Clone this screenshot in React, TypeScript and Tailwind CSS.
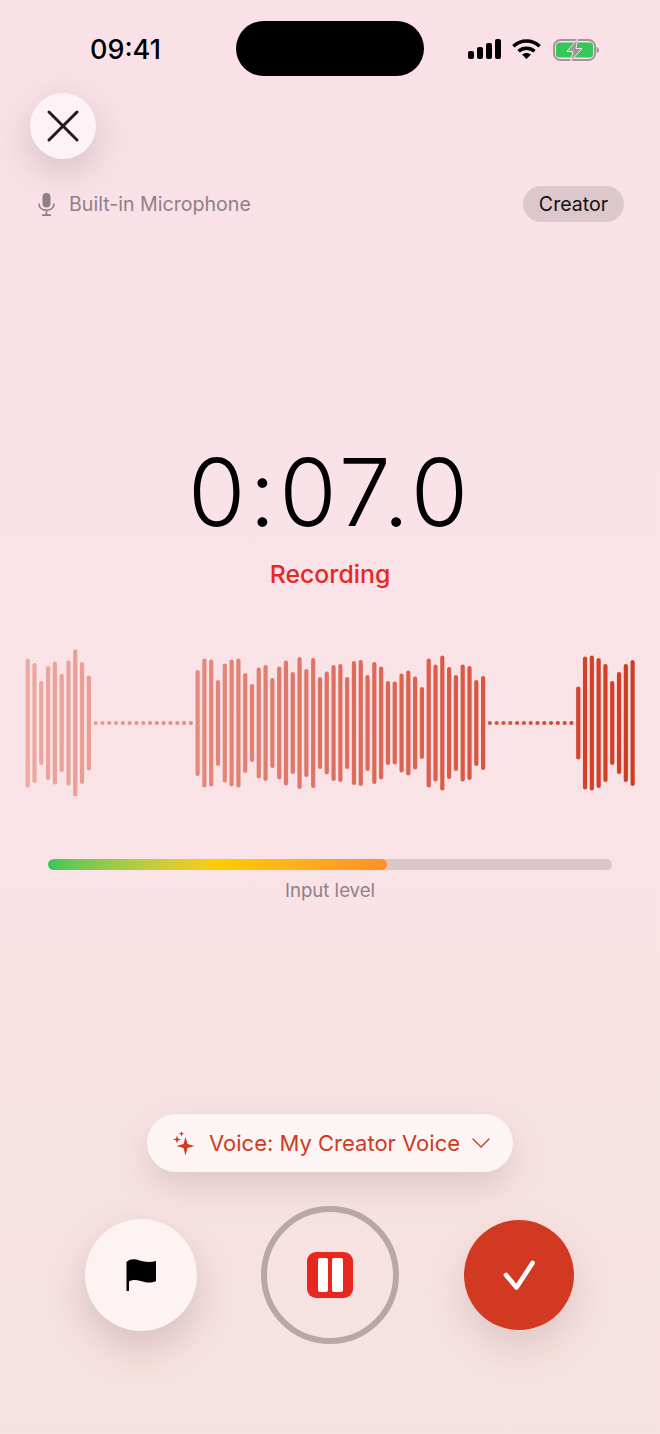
import { ChevronDown, X } from 'lucide-react';

const firstBars = [129, 120, 84, 114, 123, 98, 125, 147, 122, 95];
const middleBars = [
  106, 129, 127, 86, 119, 127, 129, 100, 78, 111, 116, 90, 113, 125, 102, 132, 108, 130, 92, 103,
  116, 118, 92, 124, 126, 96, 122, 113, 84, 83, 99, 105, 93, 72, 129, 117, 135, 112, 96, 117, 114, 86, 94,
];
const lastBars = [73, 133, 135, 130, 118, 84, 102, 118, 126];

// 0 height means a dot in the silent parts
const waveform = [
  ...firstBars,
  ...Array(15).fill(0),
  ...middleBars,
  ...Array(13).fill(0),
  ...lastBars,
];

const Waveform = () => (
  <svg width="660" height="150" viewBox="0 0 660 150" fill="#d13a20" className="mt-[58px] shrink-0">
    {waveform.map((height, i) => {
      const h = height || 4.2;
      return (
        <rect
          key={i}
          x={25.6 + i * 6.797}
          y={75 - h / 2}
          width="4.200"
          height={h}
          rx="2.100"
          opacity={0.35 + (0.65 * i) / (waveform.length - 1)}
        />
      );
    })}
  </svg>
);

const StatusIcons = () => (
  <div className="ml-[44px] flex items-center gap-[11px]">
    <svg width="33" height="20" viewBox="0 0 33 20" fill="#000">
      <rect x="0" y="12" width="6" height="8" rx="2" />
      <rect x="9" y="8" width="6" height="12" rx="2" />
      <rect x="18" y="4" width="6" height="16" rx="2" />
      <rect x="27" y="0" width="6" height="20" rx="2" />
    </svg>
    <svg width="29" height="20" viewBox="0 0 29 20" fill="none" stroke="#000" strokeWidth="3.500">
      <path d="M1.300 7.200C8.800 0.300 20.200 0.300 27.700 7.200" />
      <path d="M6.500 12.200C11 8.200 18 8.200 22.500 12.200" />
      <path d="M14.500 20L10 15.500C12.500 13.400 16.500 13.400 19 15.500Z" fill="#000" stroke="none" />
    </svg>
    <svg width="47" height="24" viewBox="0 0 47 24" fill="none" className="mt-[2px]">
      <rect x="2" y="2" width="41" height="20" rx="6.500" stroke="#a59499" strokeWidth="2" />
      <rect x="4" y="4.500" width="37" height="15" rx="3.500" fill="#34c759" />
      <path d="M44.500 9v6c1.600-.5 2.500-1.600 2.500-3s-.9-2.500-2.500-3z" fill="#a59499" />
      <path d="M25.500 1L15 13.500H21L18.500 23.500L30 10.500H24Z" fill="#a59499" stroke="#f9e1e7" strokeWidth="1" />
    </svg>
  </div>
);

const App = () => {
  return (
    <div
      className="flex h-[1434px] w-[660px] flex-col overflow-hidden bg-gradient-to-b from-[#f9e1e7] via-[#fae3e7] to-[#f6e2e0] text-black"
      style={{ fontFamily: 'Inter, "Liberation Sans", sans-serif' }}
    >
      <div className="mt-[21px] flex h-[55px] shrink-0 items-center pl-[90px]">
        <span className="w-[146px] pt-[2px] text-[27px] font-medium leading-none">09:41</span>
        <div className="h-[55px] w-[188px] rounded-full bg-black" />
        <StatusIcons />
      </div>

      <button className="ml-[30px] mt-[17px] flex h-[66px] w-[66px] shrink-0 items-center justify-center rounded-full bg-[#fdf3f6] shadow-[0_12px_36px_rgba(90,50,60,0.2)]">
        <X size={56} strokeWidth={1.3} color="#231a1e" className="shrink-0" />
      </button>

      <div className="mt-[27px] flex h-[36px] shrink-0 items-center justify-between pl-[34px] pr-[36px]">
        <div className="flex items-center gap-[10px] text-[#8f8087]">
          <svg width="25" height="25" viewBox="0 0 25 25" fill="none" stroke="#8f8087" strokeWidth="1.700">
            <rect x="8.500" y="1" width="8" height="14.500" rx="4" fill="#8f8087" stroke="none" />
            <path d="M5 11.500c0 4.200 3.200 6.800 7.500 6.800s7.500-2.600 7.500-6.800M12.500 18.500V23M8 23.200h9" />
          </svg>
          <span className="pt-[2px] text-[19.6px] leading-none">Built-in Microphone</span>
        </div>
        <div className="flex h-[36px] w-[101px] items-center justify-center rounded-full bg-[#dcc8cc] pt-[2px] text-[19.6px] text-[#141012]">
          Creator
        </div>
      </div>

      <div className="mt-[216px] h-[108px] shrink-0 text-center text-[93px] font-light leading-[108px] tracking-[3.800px]">
        0:07.0
      </div>
      <div className="mt-[12px] h-[32px] shrink-0 text-center text-[24.8px] font-[550] leading-[32px] text-[#e8281f]">
        Recording
      </div>

      <Waveform />

      <div className="mx-[48px] mt-[61px] h-[11px] shrink-0 overflow-hidden rounded-full bg-[#dac6c9]">
        <div
          className="h-full rounded-full bg-gradient-to-r from-[#34c759] via-[#ffcc00] to-[#ff8f26]"
          style={{ width: '339px' }}
        />
      </div>
      <div className="mt-[8px] h-[24px] shrink-0 text-center text-[18.6px] leading-[24px] text-[#8f8087]">
        Input level
      </div>

      <div className="mt-[212px] flex shrink-0 justify-center">
        <button className="flex h-[58px] w-[366px] items-center rounded-[29px] bg-[#fdf4f4] pl-[25px] text-[22px] text-[#d13a20] shadow-[0_14px_36px_rgba(90,50,50,0.16)]">
          <svg width="24" height="26" viewBox="0 0 24 26" fill="#d13a20" className="shrink-0">
            <path d="M13.500 7L15.500 14L22.500 16L15.500 18L13.500 25.500L11.500 18L4.500 16L11.500 14Z" />
            <path d="M5 5.500L6 8.500L9 9.500L6 10.500L5 13.500L4 10.500L1 9.500L4 8.500Z" />
            <path d="M9.500 1L10.200 3L12.200 3.800L10.200 4.500L9.500 6.500L8.800 4.500L6.800 3.800L8.800 3Z" />
          </svg>
          <span className="ml-[13px] whitespace-nowrap">Voice: My Creator Voice</span>
          <ChevronDown size={32} strokeWidth={1} className="ml-[5px] shrink-0" />
        </button>
      </div>

      <div className="mt-[34px] flex h-[138px] shrink-0 items-center pl-[85px]">
        <button className="flex h-[112px] w-[112px] items-center justify-center rounded-full bg-[#fdf3f3] shadow-[0_16px_38px_rgba(90,50,50,0.2)]">
          <svg width="30" height="32" viewBox="0 0 30 32" fill="#000">
            <path d="M0.500 3C4.500-0.500 9 0 13.500 1.500C18.500 3 24 3.500 30 2V22C25 24.500 19.500 23.500 14.500 22C10 20.500 6 20.500 3 22.500V32H0.500Z" />
          </svg>
        </button>
        <button className="ml-[64px] flex h-[138px] w-[138px] items-center justify-center rounded-full border-[6px] border-[#b9a7a8]">
          <div className="flex h-[46px] w-[46px] shrink-0 items-center justify-center gap-[4px] rounded-[9px] bg-[#e8281f]">
            <div className="h-[34px] w-[10px] rounded-[2px] bg-white" />
            <div className="h-[34px] w-[11px] rounded-[2px] bg-white" />
          </div>
        </button>
        <button className="ml-[65px] flex h-[110px] w-[110px] items-center justify-center rounded-full bg-[#d13a20] shadow-[0_16px_38px_rgba(90,50,50,0.15)]">
          <svg width="34" height="34" viewBox="0 0 34 34" fill="none" stroke="#fff" strokeWidth="4.600" strokeLinecap="round" strokeLinejoin="round">
            <path d="M4 17L14.500 29.500L30.500 5" />
          </svg>
        </button>
      </div>
    </div>
  );
};

export default App;
